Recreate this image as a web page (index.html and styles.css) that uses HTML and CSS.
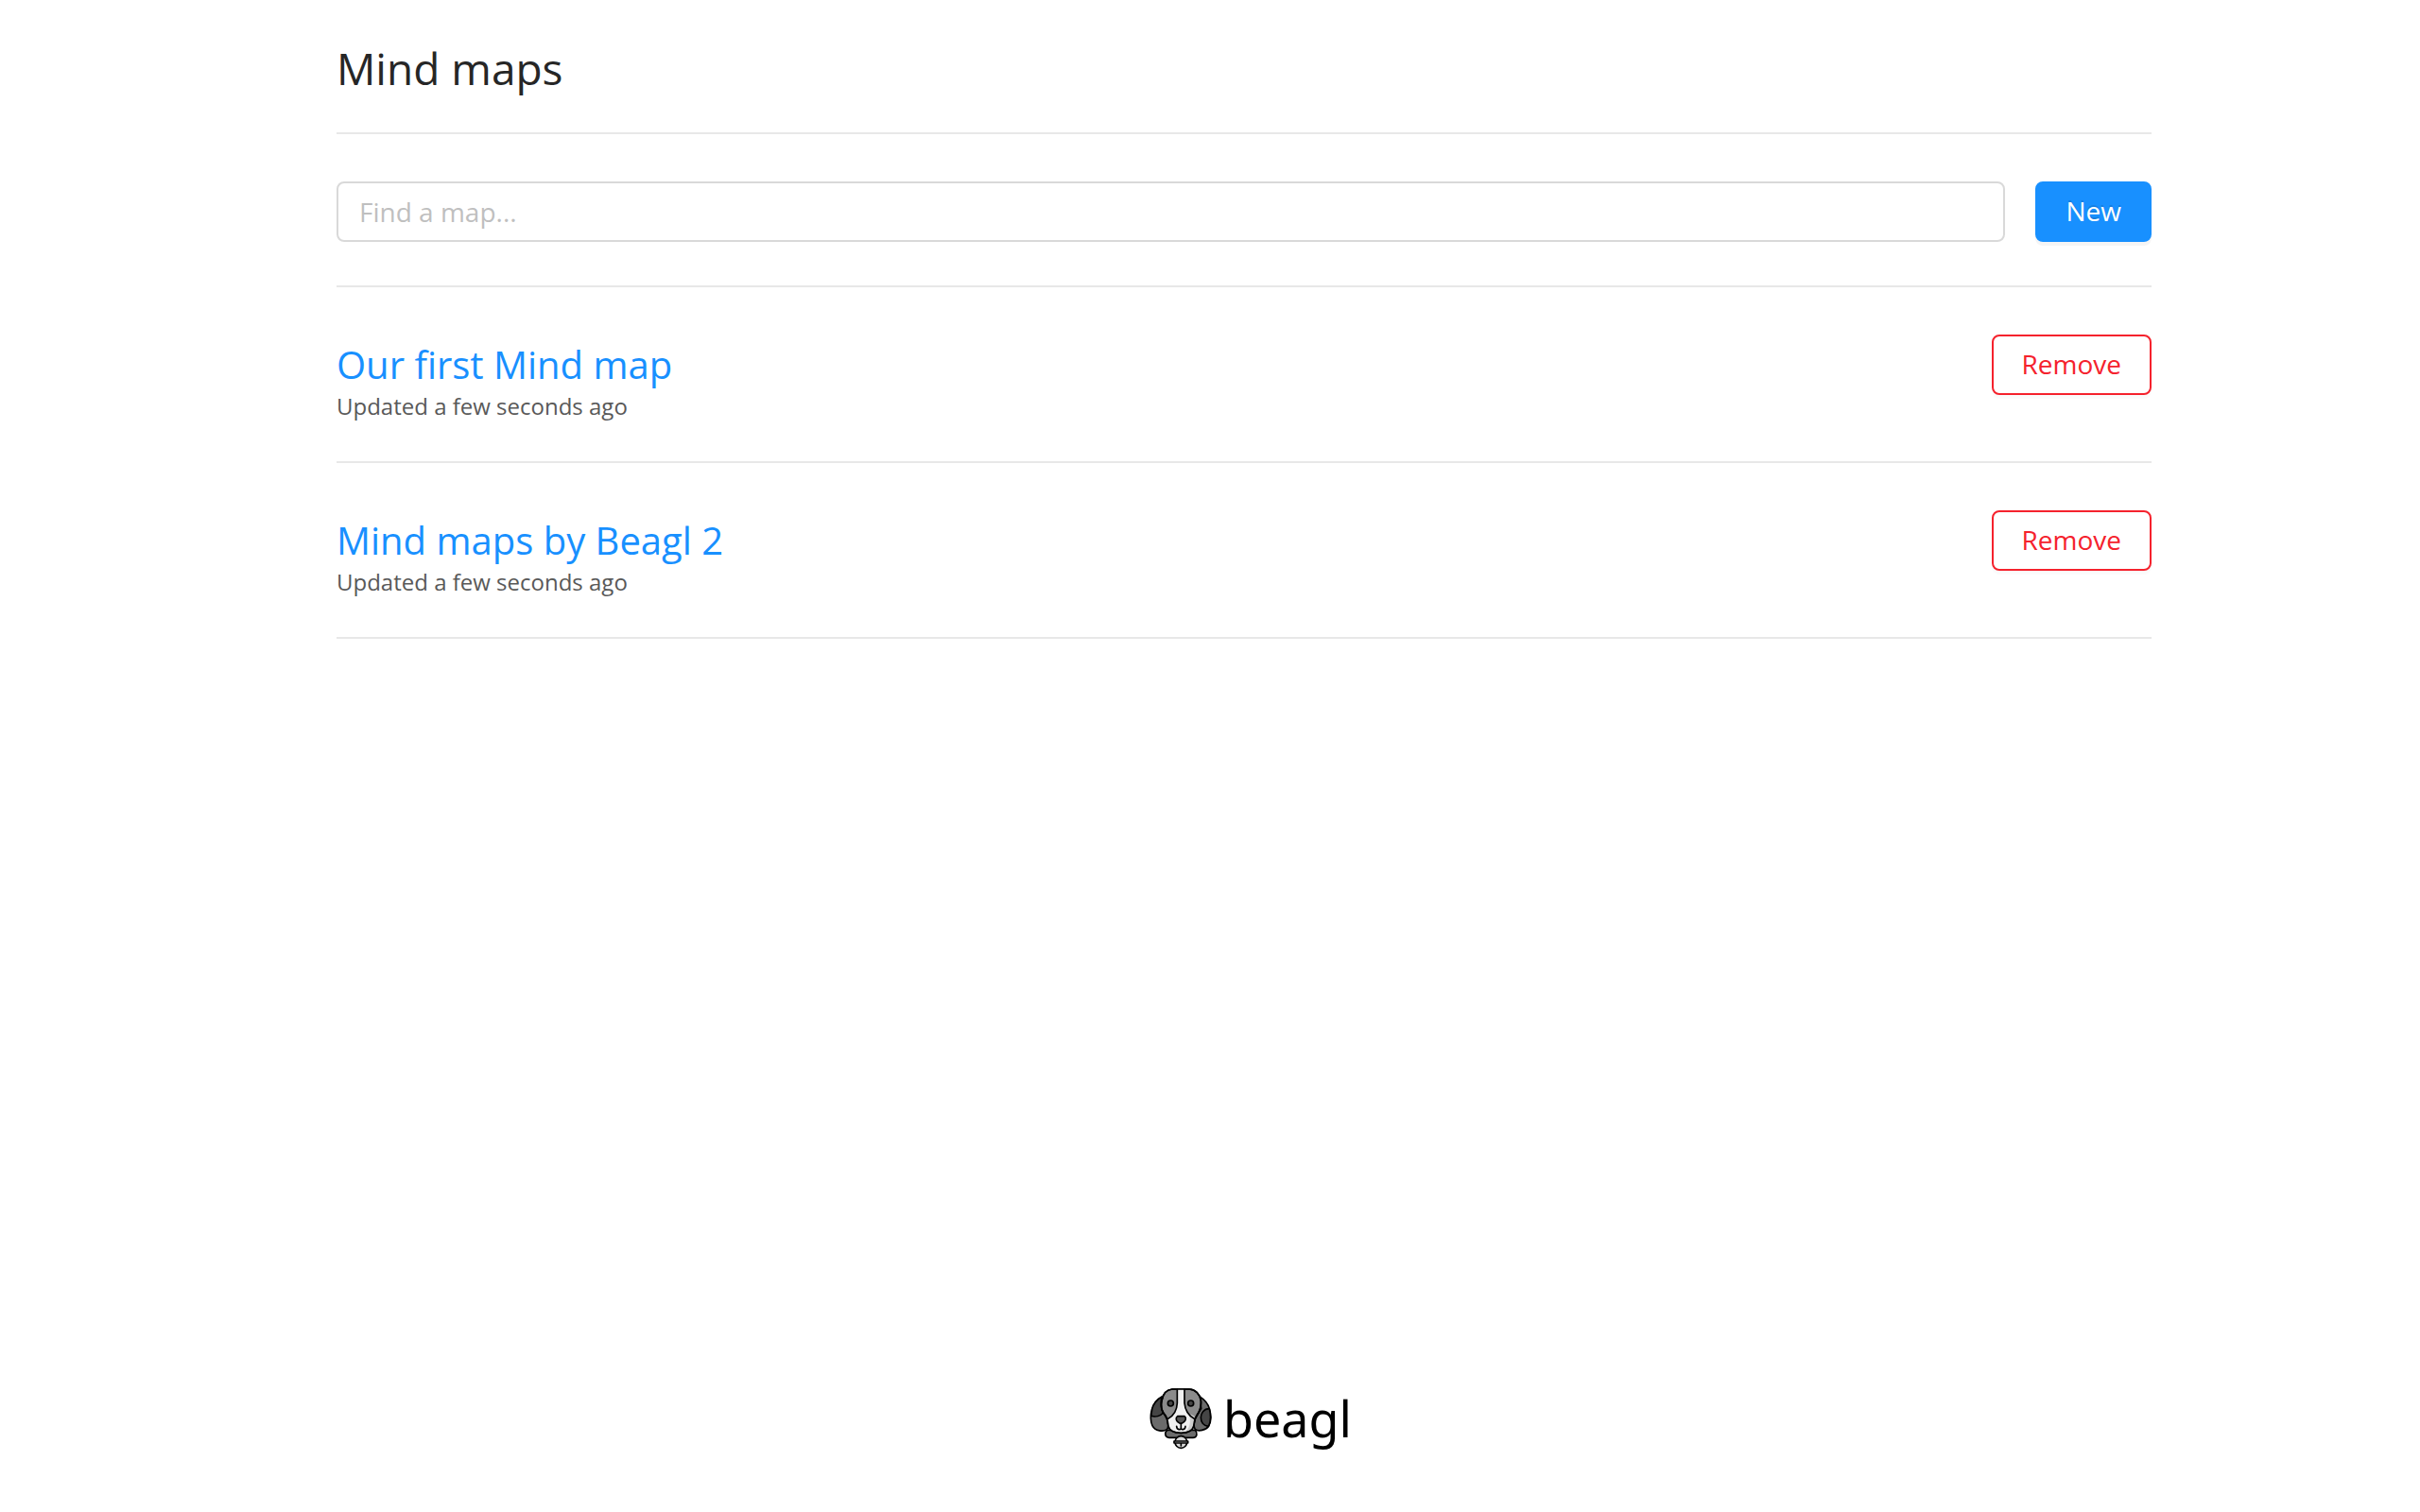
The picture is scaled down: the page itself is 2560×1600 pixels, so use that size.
FILE: index.html
```html
<!DOCTYPE html>
<html lang="en">
<head>
    <meta charset="UTF-8">
    <meta name="viewport" content="width=device-width, initial-scale=1.0">
    <title>Mind maps</title>
    <link rel="stylesheet" href="styles.css">
</head>
<body>
    <main class="content">
        <h1 class="page-title">Mind maps</h1>
        <form class="search">
            <input class="search-input" type="text" placeholder="Find a map..." aria-label="Find a map">
            <button class="btn btn-primary" type="button">New</button>
        </form>
        <ul class="map-list">
            <li class="map-item">
                <div class="map-info">
                    <a class="map-title" href="#">Our first Mind map</a>
                    <p class="map-date">Updated a few seconds ago</p>
                </div>
                <button class="btn btn-danger" type="button">Remove</button>
            </li>
            <li class="map-item">
                <div class="map-info">
                    <a class="map-title" href="#">Mind maps by Beagl 2</a>
                    <p class="map-date">Updated a few seconds ago</p>
                </div>
                <button class="btn btn-danger" type="button">Remove</button>
            </li>
        </ul>
    </main>
    <footer class="footer">
        <a class="logo" href="#">
            <svg class="logo-icon" viewBox="48 54 198 198" fill="none" stroke="#000" stroke-width="5" stroke-linecap="round" stroke-linejoin="round" aria-hidden="true">
                <!-- collar -->
                <path fill="#6b6b6b" d="M105 190C94 197 97 214 110 214H186C200 214 201 198 193 190Z"/>
                <!-- ears -->
                <path fill="#6b6b6b" d="M88 84C70 94 60 108 56 124C50 142 51 164 57 176C66 194 92 196 103 188C110 182 107 168 104 155L84 122Z"/>
                <path fill="#454545" d="M86 85C70 94 60 108 56 124L53 145C68 150 83 145 91 135C84 120 84 102 86 85Z"/>
                <path fill="#6b6b6b" d="M208 84C224 94 234 106 238 122C244 142 243 164 236 177C228 190 203 196 193 187C187 181 189 168 192 155L212 122Z"/>
                <path fill="#454545" d="M238 122C220 122 211 137 211 150C211 164 219 176 235 178C243 164 243 142 238 122Z"/>
                <!-- head -->
                <path fill="#8b8b8b" d="M120 60H174C194 61 208 76 211 96C213 118 207 132 198 143C190 155 190 164 188 178C184 193 168 199 148 199C127 199 112 193 108 178C106 164 106 154 98 143C88 132 83 115 87 96C90 78 101 62 120 60Z"/>
                <path fill="#f0f0f0" stroke="none" d="M136 61H158V104C160 124 169 138 188 145L191 154L187 178C183 192 168 197 148 197C128 197 113 192 109 178L105 154C124 145 134 126 136 104Z"/>
                <path fill="#cfcfcf" stroke="none" d="M173 138L191 146L187 178C183 190 174 194 160 196C178 184 180 160 173 138Z"/>
                <path d="M136 61V104C135 127 126 143 107 154M159 61V104C161 127 170 143 190 154"/>
                <path d="M120 60H174C194 61 208 76 211 96C213 118 207 132 198 143C190 155 190 164 188 178C184 193 168 199 148 199C127 199 112 193 108 178C106 164 106 154 98 143C88 132 83 115 87 96C90 78 101 62 120 60Z"/>
                <!-- eyes, nose and mouth -->
                <circle fill="#454545" cx="115" cy="105" r="9"/>
                <circle fill="#454545" cx="179" cy="105" r="9"/>
                <path fill="#555" d="M137 146H159C166 151 163 160 156 165C151 170 144 170 139 165C132 160 130 151 137 146Z"/>
                <path d="M148 169V185M134 178C135 190 147 190 148 184C149 190 161 190 162 178"/>
                <!-- bell -->
                <circle fill="#d8d8d8" cx="148" cy="228" r="19"/>
                <path fill="#d8d8d8" d="M126 225H170V231H126ZM148 234V240"/>
            </svg>
            <span class="logo-text">beagl</span>
        </a>
    </footer>
</body>
</html>
```
FILE: styles.css
```css
* {
    box-sizing: border-box;
}
body {
    display: flex;
    flex-direction: column;
    min-height: 100vh;
    margin: 0;
    padding-left: 72px;
    font-family: "Open Sans", sans-serif;
    font-size: 28px;
    color: #595959;
    background-color: #fff;
}
.content {
    flex: 1;
    width: 100%;
    max-width: 1920px;
    margin: 0 auto;
}
.page-title {
    margin: 0;
    padding: 40px 0 36px;
    border-bottom: 2px solid #e8e8e8;
    font-size: 46px;
    font-weight: 400;
    line-height: 64px;
    color: #262626;
}
.search {
    display: flex;
    gap: 32px;
    padding: 50px 0 46px;
    border-bottom: 2px solid #e8e8e8;
}
.search-input {
    flex: 1;
    min-width: 0;
    height: 64px;
    padding: 0 22px;
    border: 2px solid #d9d9d9;
    border-radius: 8px;
    font: inherit;
    color: #595959;
}
.search-input::placeholder {
    color: #bfbfbf;
}
.btn {
    height: 64px;
    padding: 0 30px 2px;
    border: 2px solid;
    border-radius: 8px;
    font: inherit;
    background-color: #fff;
    cursor: pointer;
}
.btn-primary {
    border-color: #1890ff;
    color: #fff;
    background-color: #1890ff;
    text-shadow: 0 -2px 0 rgba(0,0,0,0.12);
    box-shadow: 0 4px 0 rgba(0,0,0,0.04);
}
.btn-danger {
    border-color: #f5222d;
    color: #f5222d;
    box-shadow: 0 4px 0 rgba(0,0,0,0.015);
}
.map-list {
    margin: 0;
    padding: 0;
    list-style: none;
}
.map-item {
    display: flex;
    justify-content: space-between;
    align-items: flex-start;
    padding: 50px 0 46px;
    border-bottom: 2px solid #e8e8e8;
}
.map-title {
    display: block;
    font-size: 40px;
    line-height: 64px;
    color: #1890ff;
    text-decoration: none;
}
.map-date {
    margin: 0;
    font-size: 24px;
    line-height: 24px;
}
.footer {
    display: flex;
    justify-content: center;
    padding: 64px 0 66px;
}
.logo {
    display: flex;
    align-items: center;
    gap: 12px;
    padding-left: 14px;
    color: #000;
    text-decoration: none;
}
.logo-icon {
    width: 66px;
    height: 66px;
}
.logo-text {
    font-family: "Noto Sans", sans-serif;
    font-size: 52px;
    line-height: 66px;
}
```
